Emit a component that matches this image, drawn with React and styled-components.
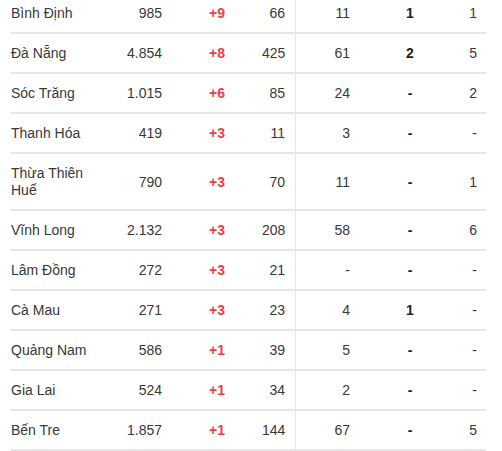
import React from 'react'
import styled, { createGlobalStyle } from 'styled-components'

const GlobalStyle = createGlobalStyle`
    body {
        margin: 0;
        background: #fff;
        font-family: "Liberation Sans", Arial, sans-serif;
        overflow: hidden;
    }
`

const Wrapper = styled.div`
    margin: -6px 0 0 11px;
    width: 475px;
`

const Table = styled.table`
    border-collapse: separate;
    border-spacing: 0;
    table-layout: fixed;
    width: 475px;
    font-size: 14px;
    line-height: 17px;
    color: #333;
`

const Cell = styled.td`
    box-sizing: border-box;
    width: ${props => props.$w}px;
    padding: 11px ${props => props.$pr}px 10px ${props => props.$pl}px;
    text-align: ${props => props.$align};
    vertical-align: middle;
    border-bottom: 2px solid #e6e6e6;
    border-right: ${props => props.$divider ? '1px solid #e6e6e6' : 'none'};
    font-weight: ${props => props.$bold ? 700 : 400};
    color: ${props => props.$color || '#383838'};
`

const columns = [
    { w: 89, pl: 0, pr: 10, align: 'left' },
    { w: 72, pl: 10, pr: 10, align: 'right' },
    { w: 90, pl: 10, pr: 10, align: 'center', bold: true, color: '#ec3d4c' },
    { w: 34, pl: 0, pr: 10, align: 'right', divider: true },
    { w: 64, pl: 10, pr: 10, align: 'right' },
    { w: 100, pl: 10, pr: 10, align: 'center', bold: true, color: '#222' },
    { w: 26, pl: 0, pr: 9, align: 'right' },
]

const rows = [
    ['Bình Định', '985', '+9', '66', '11', '1', '1'],
    ['Đà Nẵng', '4.854', '+8', '425', '61', '2', '5'],
    ['Sóc Trăng', '1.015', '+6', '85', '24', '-', '2'],
    ['Thanh Hóa', '419', '+3', '11', '3', '-', '-'],
    ['Thừa Thiên Huế', '790', '+3', '70', '11', '-', '1'],
    ['Vĩnh Long', '2.132', '+3', '208', '58', '-', '6'],
    ['Lâm Đồng', '272', '+3', '21', '-', '-', '-'],
    ['Cà Mau', '271', '+3', '23', '4', '1', '-'],
    ['Quảng Nam', '586', '+1', '39', '5', '-', '-'],
    ['Gia Lai', '524', '+1', '34', '2', '-', '-'],
    ['Bến Tre', '1.857', '+1', '144', '67', '-', '5'],
]

const App = () => (
    <>
        <GlobalStyle />
        <Wrapper>
            <Table>
                <tbody>
                    {rows.map((row, i) => (
                        <tr key={i}>
                            {row.map((value, j) => {
                                const col = columns[j]
                                return (
                                    <Cell
                                        key={j}
                                        $w={col.w}
                                        $pl={col.pl}
                                        $pr={col.pr}
                                        $align={col.align}
                                        $bold={col.bold}
                                        $color={col.color}
                                        $divider={col.divider}
                                    >
                                        {value}
                                    </Cell>
                                )
                            })}
                        </tr>
                    ))}
                </tbody>
            </Table>
        </Wrapper>
    </>
)

export default App
